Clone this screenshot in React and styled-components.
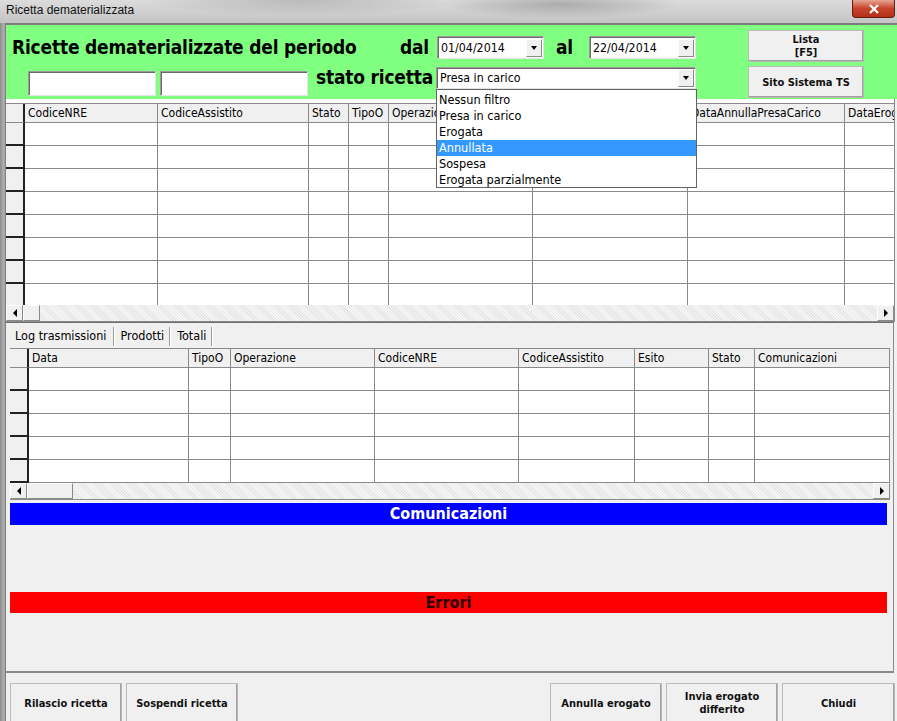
import React from 'react';
import styled, { createGlobalStyle } from 'styled-components';

const UI = '"DejaVu Sans Condensed", "DejaVu Sans", sans-serif';

const Global = createGlobalStyle`
  html, body { margin: 0; padding: 0; background: #f0f0f0; }
  * { box-sizing: border-box; }
`;

const Window = styled.div`
  width: 897px;
  height: 721px;
  overflow: hidden;
  display: flex;
  flex-direction: column;
  background: #a9a9a9;
  font-family: ${UI};
  color: #000;
`;

const TitleBar = styled.div`
  height: 23px;
  flex: none;
  display: flex;
  align-items: flex-start;
  justify-content: space-between;
  background:
    radial-gradient(ellipse 120px 14px at 560px 4px, rgba(90,90,90,0.35), transparent),
    radial-gradient(ellipse 160px 16px at 300px 0px, rgba(110,110,110,0.3), transparent),
    linear-gradient(#dcdcdc, #c4c4c4);
`;

const TitleText = styled.span`
  font-family: "Liberation Sans", Arial, sans-serif;
  font-size: 12px;
  line-height: 16px;
  padding: 2px 0 0 6px;
  color: #111;
`;

const CloseButton = styled.div`
  width: 43px;
  height: 18px;
  margin-right: 2px;
  border: 1px solid #6b1d10;
  border-top: none;
  border-radius: 0 0 4px 4px;
  background: linear-gradient(#e8a493, #c7432a 50%, #b42f17);
  color: #fff;
  display: flex;
  align-items: center;
  justify-content: center;
`;

const Body = styled.div`
  flex: 1;
  min-height: 0;
  display: flex;
`;

const LeftFrame = styled.div`
  width: 6px;
  flex: none;
  background: linear-gradient(to right, #8c8c8c, #b4b4b4 70%, #6a6a6a);
`;

const Client = styled.div`
  flex: 1;
  min-width: 0;
  display: flex;
  flex-direction: column;
  background: #f0f0f0;
  border-top: 2px solid #7c7c7c;
`;

const Header = styled.div`
  position: relative;
  z-index: 2;
  height: 74px;
  flex: none;
  display: flex;
  background: #80ff80;
  padding-left: 6px;
`;

const HeaderMain = styled.div`
  display: flex;
  flex-direction: column;
  gap: 8px;
  padding-top: 11px;
`;

const HeaderRow = styled.div`
  display: flex;
  align-items: flex-start;
  height: ${p => p.$h}px;
  padding-left: ${p => p.$indent || 0}px;
`;

const BigLabel = styled.div`
  width: ${p => p.$w}px;
  margin-left: ${p => p.$ml || 0}px;
  margin-top: ${p => p.$mt || 0}px;
  font-weight: bold;
  font-size: 19px;
  line-height: 23px;
  white-space: nowrap;
  letter-spacing: -0.2px;
`;

const Sunken = styled.div`
  width: ${p => p.$w}px;
  height: ${p => p.$h}px;
  margin-left: ${p => p.$ml || 0}px;
  margin-top: ${p => p.$mt || 0}px;
  background: #fff;
  border: 1px solid;
  border-color: #9a9a9a #e3e3e3 #e3e3e3 #9a9a9a;
  box-shadow: inset 1px 1px 0 #6a6a6a;
  display: flex;
  align-items: center;
  justify-content: space-between;
  padding: 0 1px 0 3px;
  font-size: 12.3px;
`;

const DropArrow = styled.div`
  width: 16px;
  height: 18px;
  background: #f0f0f0;
  border: 1px solid;
  border-color: #ffffff #8a8a8a #8a8a8a #ffffff;
  display: flex;
  align-items: center;
  justify-content: center;
`;

const Tri = styled.span`
  width: 0;
  height: 0;
  border-left: ${p => p.$dir === 'down' ? '3px solid transparent' : p.$dir === 'right' ? '4px solid #000' : '0'};
  border-right: ${p => p.$dir === 'down' ? '3px solid transparent' : p.$dir === 'left' ? '4px solid #000' : '0'};
  border-top: ${p => p.$dir === 'down' ? '4px solid #000' : '4px solid transparent'};
  border-bottom: ${p => p.$dir === 'down' ? '0' : '4px solid transparent'};
`;

const SideButtons = styled.div`
  display: flex;
  flex-direction: column;
  gap: 4px;
  padding-top: 5px;
  margin-left: 52px;
`;

const RaisedButton = styled.div`
  width: ${p => p.$w || 116}px;
  height: ${p => p.$h || 32}px;
  flex: none;
  background: #f0f0f0;
  border: 1px solid;
  border-color: #ffffff #6d6d6d #6d6d6d #ffffff;
  box-shadow: inset -1px -1px 0 #a0a0a0;
  outline: 1px solid #b9b9b9;
  outline-offset: -1px;
  display: flex;
  align-items: center;
  justify-content: center;
  text-align: center;
  font-weight: bold;
  font-size: 11px;
  line-height: 13px;
  color: #111;
`;

const DropList = styled.div`
  position: absolute;
  left: 430px;
  top: 64px;
  width: 261px;
  height: 99px;
  background: #fff;
  border: 1px solid #646464;
  padding-top: 2px;
`;

const DropItem = styled.div`
  height: 16px;
  line-height: 16px;
  padding-left: 2px;
  font-size: 12.6px;
  background: ${p => p.$sel ? '#3399ff' : 'transparent'};
  color: ${p => p.$sel ? '#fff' : '#000'};
`;

const GridSection = styled.div`
  background: #fff;
  padding-top: 4px;
  margin-right: 2px;
  border-right: 1px solid #8a8a8a;
  flex: none;
`;

const Grid = styled.div`
  width: ${p => p.$w}px;
  margin-left: ${p => p.$ml || 0}px;
  background: #fff;
  overflow: hidden;
  border-top: 1px solid #8a8a8a;
`;

const GridRow = styled.div`
  display: grid;
  grid-template-columns: ${p => p.$cols};
  height: ${p => p.$h}px;
  background: ${p => p.$head ? '#f0f0f0' : '#fff'};
`;

const Cell = styled.div`
  border-right: 1px solid #8a8a8a;
  border-bottom: 1px solid #8a8a8a;
  font-size: 12px;
  line-height: 18px;
  padding-left: 3px;
  white-space: nowrap;
  overflow: hidden;
`;

const SelCell = styled.div`
  background: #f0f0f0;
  border-right: 2px solid #222;
  border-bottom: ${p => p.$head ? '1px solid #8a8a8a' : '2px solid #222'};
`;

const GridBody = styled.div`
  height: ${p => p.$h}px;
  overflow: hidden;
`;

const ScrollBar = styled.div`
  width: ${p => p.$w}px;
  margin-left: ${p => p.$ml || 0}px;
  height: 17px;
  flex: none;
  display: flex;
  align-items: stretch;
  border-bottom: 1px solid #8a8a8a;
  background: repeating-linear-gradient(45deg, #e6e6e6 0 1px, #f7f7f7 1px 2px);
`;

const ScrollBtn = styled.div`
  width: ${p => p.$w || 17}px;
  background: #f0f0f0;
  border: 1px solid;
  border-color: #fdfdfd #8a8a8a #8a8a8a #fdfdfd;
  display: flex;
  align-items: center;
  justify-content: center;
  margin-left: ${p => p.$push ? 'auto' : '0'};
`;

const LowerPanel = styled.div`
  flex: 1;
  min-height: 0;
  display: flex;
  flex-direction: column;
  border-top: 1px solid #6e6e6e;
  border-bottom: 2px solid #8a8a8a;
  border-right: 1px solid #8a8a8a;
  margin-right: 3px;
  padding-left: 4px;
`;

const TabStrip = styled.div`
  height: 25px;
  flex: none;
  display: flex;
  align-items: flex-start;
  padding-top: 3px;
`;

const Tab = styled.div`
  padding: 0 ${p => p.$pr}px 0 ${p => p.$pl}px;
  height: 19px;
  line-height: 17px;
  font-size: 12.5px;
  margin-top: 1px;
  border-right: 1px solid #9a9a9a;
  box-shadow: 1px 0 0 #fff;
  margin-right: 1px;
`;

const InfoBar = styled.div`
  width: 877px;
  height: ${p => p.$h}px;
  flex: none;
  margin-top: ${p => p.$mt}px;
  background: ${p => p.$bg};
  color: ${p => p.$fg};
  font-weight: bold;
  font-size: 16px;
  line-height: ${p => p.$h}px;
  text-align: center;
`;

const BottomBar = styled.div`
  flex: none;
  height: 48px;
  display: flex;
  padding: 10px 2px 0 4px;
  gap: 4px;
`;

const Spacer = styled.div`
  flex: 1;
`;

const topCols = [19, 133, 151, 40, 40, 144, 155, 157, 80];
const topHeads = ['CodiceNRE', 'CodiceAssistito', 'Stato', 'TipoO', 'Operazione', 'DataPresaCarico', 'DataAnnullaPresaCarico', 'DataErogazione'];
const lowCols = [19, 160, 42, 144, 144, 116, 74, 46, 135];
const lowHeads = ['Data', 'TipoO', 'Operazione', 'CodiceNRE', 'CodiceAssistito', 'Esito', 'Stato', 'Comunicazioni'];

const colsToTemplate = cols => cols.map(c => `${c}px`).join(' ');

function DataGrid({ cols, heads, rows, width, ml, bodyH }) {
  const tpl = colsToTemplate(cols);
  return (
    <Grid $w={width} $ml={ml}>
      <GridRow $cols={tpl} $h={19} $head>
        <SelCell $head />
        {heads.map(h => <Cell key={h}>{h}</Cell>)}
      </GridRow>
      <GridBody $h={bodyH}>
        {Array.from({ length: rows }).map((_, i) => (
          <GridRow key={i} $cols={tpl} $h={23}>
            <SelCell />
            {heads.map(h => <Cell key={h} />)}
          </GridRow>
        ))}
      </GridBody>
    </Grid>
  );
}

const stati = ['Nessun filtro', 'Presa in carico', 'Erogata', 'Annullata', 'Sospesa', 'Erogata parzialmente'];

export default function App() {
  return (
    <>
      <Global />
      <Window>
        <TitleBar>
          <TitleText>Ricetta dematerializzata</TitleText>
          <CloseButton>
            <svg width="12" height="10" viewBox="0 0 12 10">
              <path d="M2 1 L10 9 M10 1 L2 9" stroke="#fff" strokeWidth="2.2" />
            </svg>
          </CloseButton>
        </TitleBar>
        <Body>
          <LeftFrame />
          <Client>
            <Header>
              <HeaderMain>
                <HeaderRow $h={23}>
                  <BigLabel $w={388}>Ricette dematerializzate del periodo</BigLabel>
                  <BigLabel $w={37}>dal</BigLabel>
                  <Sunken $w={107} $h={23}>
                    <span>01/04/2014</span>
                    <DropArrow><Tri $dir="down" /></DropArrow>
                  </Sunken>
                  <BigLabel $w={33} $ml={12}>al</BigLabel>
                  <Sunken $w={107} $h={23}>
                    <span>22/04/2014</span>
                    <DropArrow><Tri $dir="down" /></DropArrow>
                  </Sunken>
                </HeaderRow>
                <HeaderRow $h={29} $indent={16}>
                  <Sunken $w={128} $h={25} $mt={4} />
                  <Sunken $w={148} $h={25} $mt={4} $ml={4} />
                  <BigLabel $w={120} $ml={8} $mt={-1}>stato ricetta</BigLabel>
                  <Sunken $w={260} $h={22}>
                    <span>Presa in carico</span>
                    <DropArrow><Tri $dir="down" /></DropArrow>
                  </Sunken>
                </HeaderRow>
              </HeaderMain>
              <SideButtons>
                <RaisedButton>Lista<br />[F5]</RaisedButton>
                <RaisedButton>Sito Sistema TS</RaisedButton>
              </SideButtons>
              <DropList>
                {stati.map(s => <DropItem key={s} $sel={s === 'Annullata'}>{s}</DropItem>)}
              </DropList>
            </Header>
            <GridSection>
              <DataGrid cols={topCols} heads={topHeads} rows={8} width={888} bodyH={182} />
              <ScrollBar $w={888}>
                <ScrollBtn><Tri $dir="left" /></ScrollBtn>
                <ScrollBtn $w={17} />
                <ScrollBtn $push><Tri $dir="right" /></ScrollBtn>
              </ScrollBar>
            </GridSection>
            <LowerPanel>
              <TabStrip>
                <Tab $pl={5} $pr={7}>Log trasmissioni</Tab>
                <Tab $pl={5} $pr={5}>Prodotti</Tab>
                <Tab $pl={6} $pr={5}>Totali</Tab>
              </TabStrip>
              <DataGrid cols={lowCols} heads={lowHeads} rows={5} width={880} bodyH={115} />
              <ScrollBar $w={880}>
                <ScrollBtn><Tri $dir="left" /></ScrollBtn>
                <ScrollBtn $w={46} />
                <ScrollBtn $push><Tri $dir="right" /></ScrollBtn>
              </ScrollBar>
              <InfoBar $bg="#0000ff" $fg="#fff" $h={22} $mt={3}>Comunicazioni</InfoBar>
              <InfoBar $bg="#ff0000" $fg="#2a0000" $h={21} $mt={67}>Errori</InfoBar>
            </LowerPanel>
            <BottomBar>
              <RaisedButton $w={112} $h={40}>Rilascio ricetta</RaisedButton>
              <RaisedButton $w={112} $h={40}>Sospendi ricetta</RaisedButton>
              <Spacer />
              <RaisedButton $w={112} $h={40}>Annulla erogato</RaisedButton>
              <RaisedButton $w={112} $h={40}>Invia erogato<br />differito</RaisedButton>
              <RaisedButton $w={113} $h={40}>Chiudi</RaisedButton>
            </BottomBar>
          </Client>
        </Body>
      </Window>
    </>
  );
}
